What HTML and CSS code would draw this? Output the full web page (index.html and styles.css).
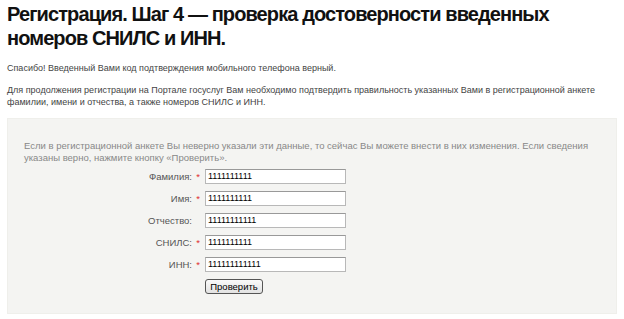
FILE: index.html
```html
<!DOCTYPE html>
<html lang="ru">
<head>
<meta charset="UTF-8">
<title>Регистрация. Шаг 4</title>
<link rel="stylesheet" href="styles.css">
</head>
<body>
<div class="page">
    <h1 class="title">Регистрация. Шаг 4 — проверка достоверности введенных номеров СНИЛС и ИНН.</h1>
    <p class="text">Спасибо! Введенный Вами код подтверждения мобильного телефона верный.</p>
    <p class="text">Для продолжения регистрации на Портале госуслуг Вам необходимо подтвердить правильность указанных Вами в регистрационной анкете фамилии, имени и отчества, а также номеров СНИЛС и ИНН.</p>
    <div class="check-box">
        <p class="hint">Если в регистрационной анкете Вы неверно указали эти данные, то сейчас Вы можете внести в них изменения. Если сведения указаны верно, нажмите кнопку «Проверить».</p>
        <div class="form">
            <div class="form-row">
                <label class="label">Фамилия:<span class="star">*</span></label>
                <input class="field" type="text" value="1111111111">
            </div>
            <div class="form-row">
                <label class="label">Имя:<span class="star">*</span></label>
                <input class="field" type="text" value="1111111111">
            </div>
            <div class="form-row">
                <label class="label">Отчество:<span class="star"></span></label>
                <input class="field" type="text" value="11111111111">
            </div>
            <div class="form-row">
                <label class="label">СНИЛС:<span class="star">*</span></label>
                <input class="field" type="text" value="1111111111">
            </div>
            <div class="form-row">
                <label class="label">ИНН:<span class="star">*</span></label>
                <input class="field" type="text" value="111111111111">
            </div>
            <div class="form-row">
                <span class="label"></span>
                <button class="button">Проверить</button>
            </div>
        </div>
    </div>
</div>
</body>
</html>
```

FILE: styles.css
```css
body {
    margin: 0;
    background-color: #fff;
    font-family: "Liberation Sans", Arial, sans-serif;
    color: #333;
}
.page {
    padding: 2px 7px 0 7px;
}
.title {
    font-family: "Liberation Sans", Arial, sans-serif;
    font-size: 20px;
    line-height: 24px;
    letter-spacing: -0.9px;
    font-weight: bold;
    color: #111;
    margin: 0 0 12px 0;
    width: 590px;
}
.text {
    font-size: 9px;
    line-height: 12px;
    margin: 0 0 10px 0;
    color: #444;
}
.check-box {
    background-color: #f4f4f2;
    border: 1px solid #efefeb;
    margin-top: 10px;
    padding: 21px 16px 20px 16px;
    height: 153px;
}
.hint {
    font-size: 9.5px;
    line-height: 12px;
    color: #888;
    margin: 0 0 1px 0;
    width: 575px;
}
.form-row {
    display: flex;
    align-items: center;
    height: 22px;
}
.label {
    width: 180px;
    text-align: right;
    font-size: 9.5px;
    color: #555;
}
.star {
    display: inline-block;
    width: 12px;
    text-align: center;
    color: #e03030;
}
.field {
    width: 141px;
    height: 15px;
    box-sizing: border-box;
    border: 1px solid #b8b8b8;
    border-top-color: #999;
    padding: 1px 2px;
    font-family: "Liberation Sans", Arial, sans-serif;
    font-size: 9px;
    color: #000;
    background-color: #fff;
    margin-left: 1px;
}
.button {
    margin-left: 1px;
    font-family: "Liberation Sans", Arial, sans-serif;
    font-size: 9.5px;
    padding: 1px 4px;
    height: 15px;
    width: 58px;
    border: 1px solid #555;
    border-radius: 3px;
    background: linear-gradient(#fafafa, #e2e2e2);
    color: #000;
}
```
